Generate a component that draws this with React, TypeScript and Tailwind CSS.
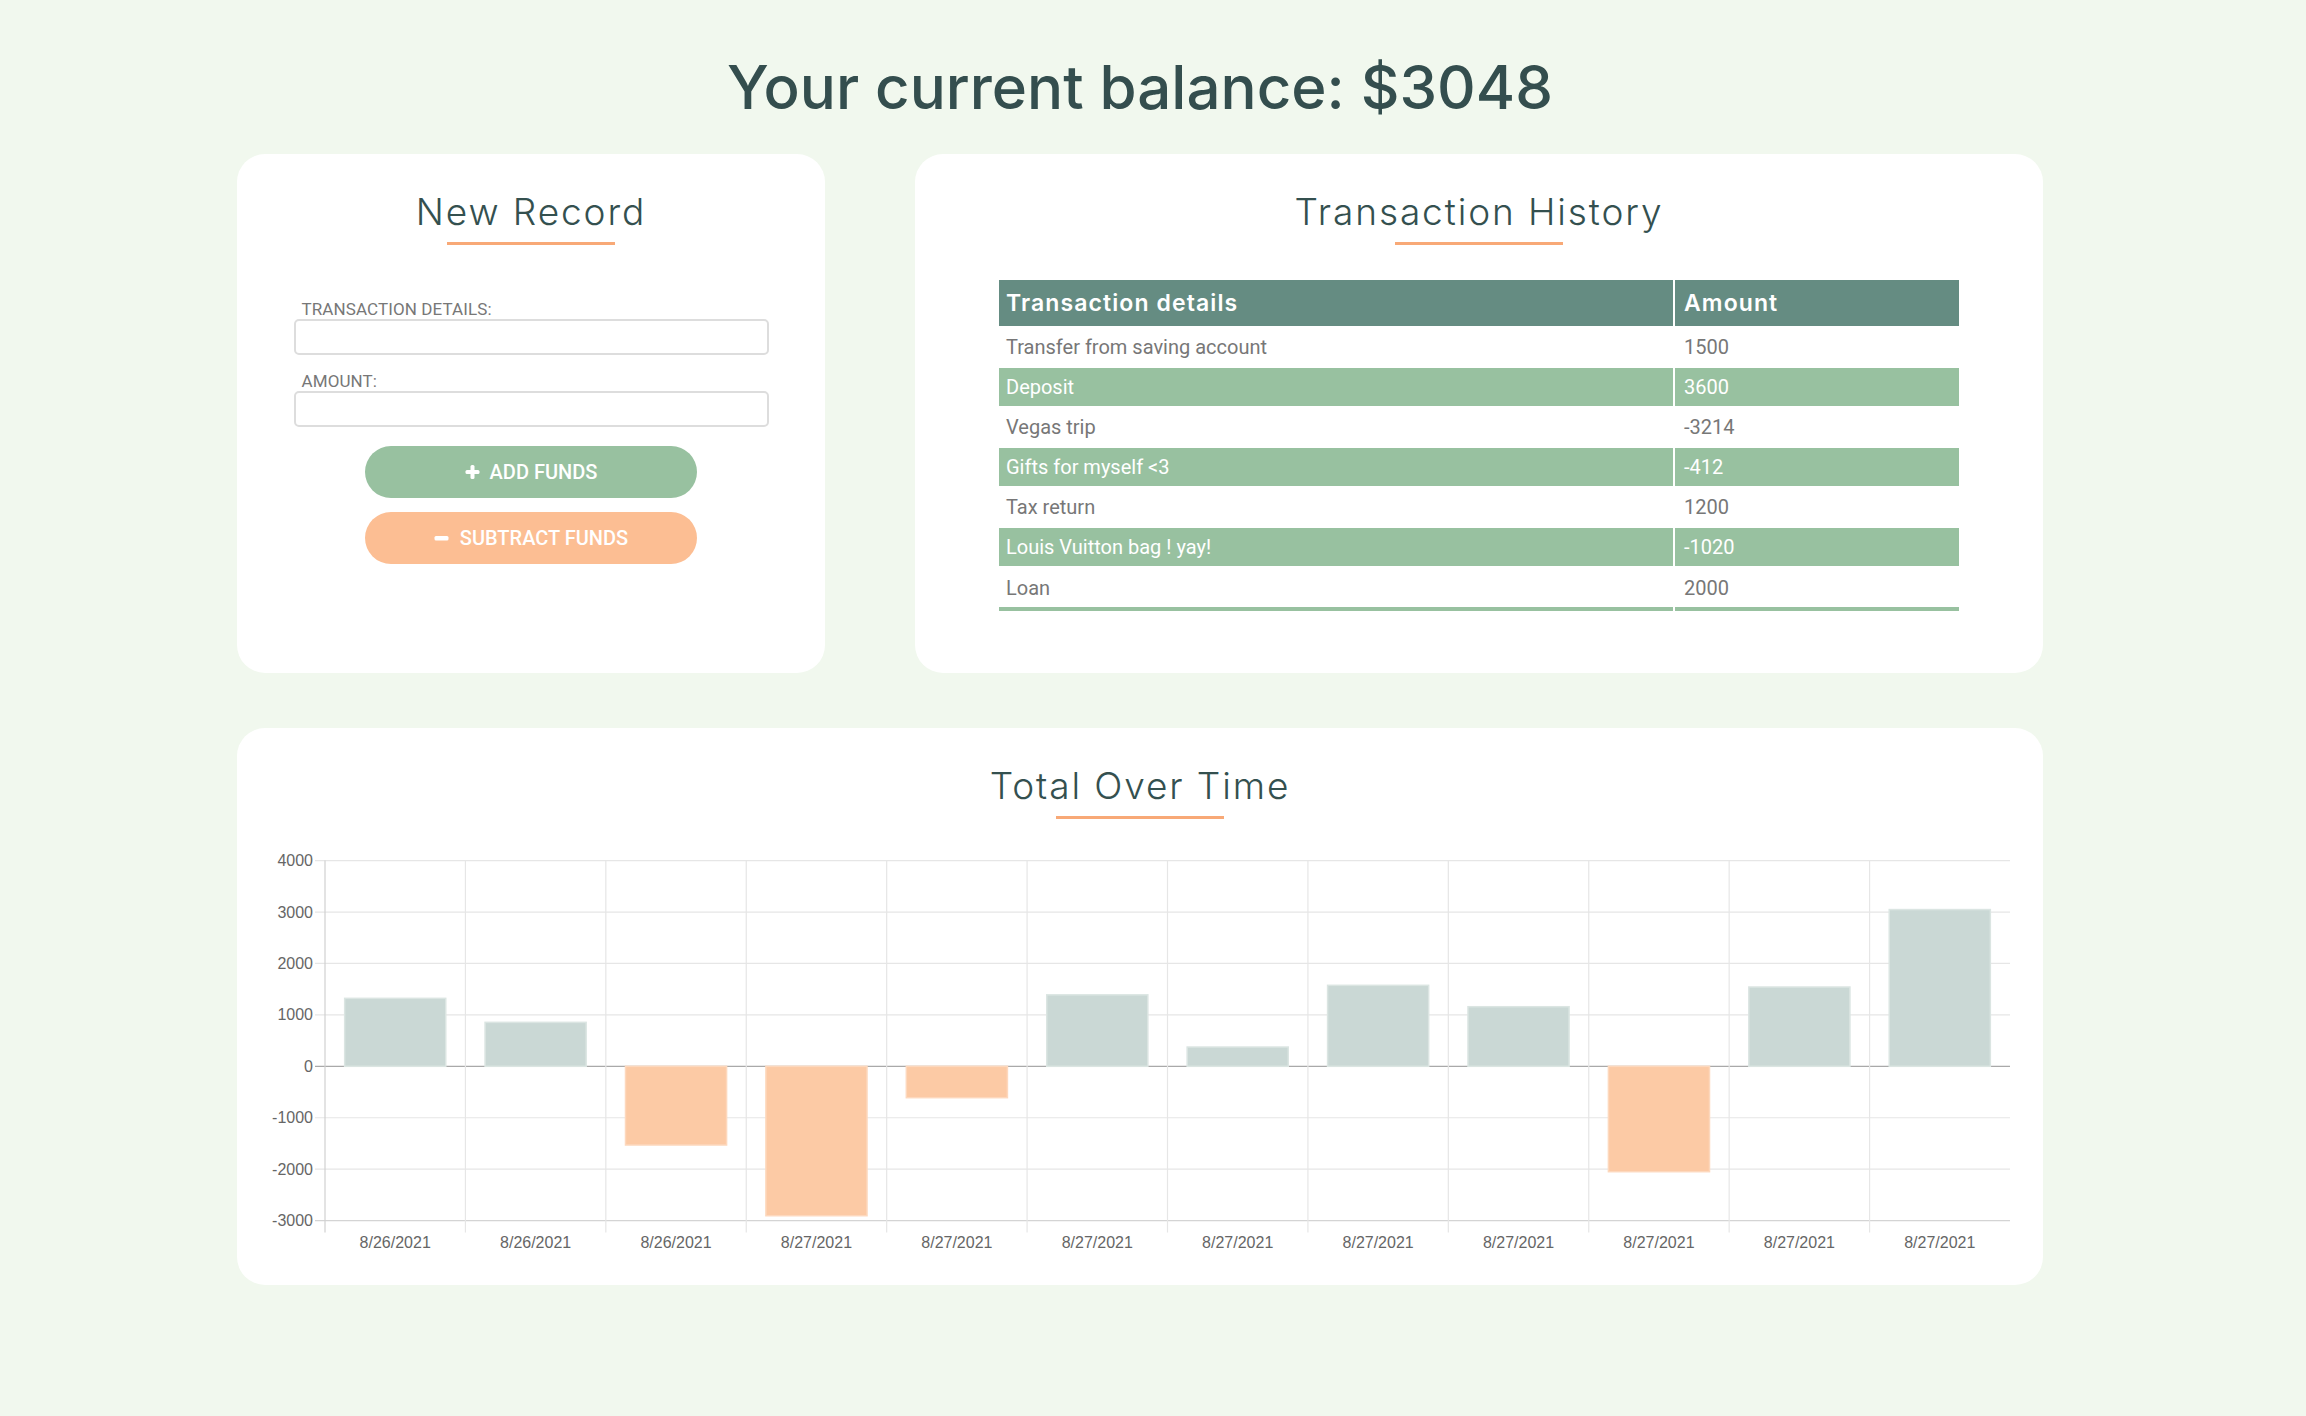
import React from 'react';

const records = [
  { details: 'Transfer from saving account', amount: 1500 },
  { details: 'Deposit', amount: 3600 },
  { details: 'Vegas trip', amount: -3214 },
  { details: 'Gifts for myself <3', amount: -412 },
  { details: 'Tax return', amount: 1200 },
  { details: 'Louis Vuitton bag ! yay!', amount: -1020 },
  { details: 'Loan', amount: 2000 },
];

const totals = [
  { date: '8/26/2021', value: 1322 },
  { date: '8/26/2021', value: 855 },
  { date: '8/26/2021', value: -1530 },
  { date: '8/27/2021', value: -2905 },
  { date: '8/27/2021', value: -610 },
  { date: '8/27/2021', value: 1390 },
  { date: '8/27/2021', value: 375 },
  { date: '8/27/2021', value: 1575 },
  { date: '8/27/2021', value: 1159 },
  { date: '8/27/2021', value: -2049 },
  { date: '8/27/2021', value: 1542 },
  { date: '8/27/2021', value: 3048 },
];

// chart geometry (px inside the svg)
const PLOT_LEFT = 88;
const PLOT_RIGHT = 1773;
const PLOT_TOP = 19.6;
const PER_1000 = 51.43;
const ZERO_Y = PLOT_TOP + 4 * PER_1000;
const CAT_W = (PLOT_RIGHT - PLOT_LEFT) / totals.length;
const BAR_W = CAT_W * 0.72;
const ticks = [4000, 3000, 2000, 1000, 0, -1000, -2000, -3000];

function CardTitle({ children }: { children: React.ReactNode }) {
  return (
    <div className="flex flex-col items-center">
      <h2 className="font-['Inter',sans-serif] font-light text-[37px] leading-[44px] tracking-[1.9px] text-[#34504f]">{children}</h2>
      <div className="mt-[8px] h-[3px] w-[168px] bg-[#f8a977]" />
    </div>
  );
}

function PlusIcon() {
  return (
    <svg width="15" height="14" viewBox="0 0 15 14" className="fill-white">
      <rect x="5.5" y="0" width="4" height="14" rx="1.5" />
      <rect x="0.5" y="5" width="14" height="4" rx="1.5" />
    </svg>
  );
}

function MinusIcon() {
  return (
    <svg width="15" height="14" viewBox="0 0 15 14" className="fill-white">
      <rect x="0.5" y="5" width="14" height="4.5" rx="1.5" />
    </svg>
  );
}

function NewRecord() {
  return (
    <div className="w-[588px] h-[519px] bg-white rounded-[28px] pt-[36px]">
      <CardTitle>New Record</CardTitle>
      <form className="mt-[54px] w-[475px] mx-auto flex flex-col font-['Roboto',sans-serif]" onSubmit={(e) => e.preventDefault()}>
        <label className="pl-[8px] text-[17px] leading-[20px] tracking-[0.1px] text-[#777] uppercase">Transaction details:</label>
        <input className="h-[36px] w-full border-2 border-[#dddddd] rounded-[5px] outline-none" />
        <label className="mt-[16px] pl-[8px] text-[17px] leading-[20px] tracking-[0.1px] text-[#777] uppercase">Amount:</label>
        <input className="h-[36px] w-full border-2 border-[#dddddd] rounded-[5px] outline-none" />
        <button type="button" className="mt-[19px] mx-auto w-[332px] h-[52px] rounded-full bg-[#98c1a0] text-white text-[20px] font-medium flex items-center justify-center gap-[10px]">
          <PlusIcon /> ADD FUNDS
        </button>
        <button type="button" className="mt-[14px] mx-auto w-[332px] h-[52px] rounded-full bg-[#fcbe93] text-white text-[20px] font-medium flex items-center justify-center gap-[11px]">
          <MinusIcon /> SUBTRACT FUNDS
        </button>
      </form>
    </div>
  );
}

function TransactionHistory() {
  return (
    <div className="flex-1 h-[519px] bg-white rounded-[28px] pt-[36px]">
      <CardTitle>Transaction History</CardTitle>
      <table className="mt-[33px] mx-auto w-[964px] border-separate border-spacing-[2px] table-fixed">
        <thead>
          <tr className="h-[46px] bg-[#658c82] text-white font-['Inter',sans-serif] font-semibold text-[23px] tracking-[1.1px] text-left">
            <th className="w-[674px] pl-[7px] font-semibold">Transaction details</th>
            <th className="pl-[9px] font-semibold">Amount</th>
          </tr>
        </thead>
        <tbody className="font-['Roboto',sans-serif] text-[20px]">
          {records.map((r, i) => {
            const green = i % 2 === 1;
            const last = i === records.length - 1;
            const cell = `${green ? 'bg-[#98c1a0] text-white' : 'text-[#777]'} ${last ? 'h-[43px] border-b-[4px] border-[#98c1a0]' : 'h-[38px]'}`;
            return (
              <tr key={i}>
                <td className={`${cell} pl-[7px]`}>{r.details}</td>
                <td className={`${cell} pl-[9px]`}>{r.amount}</td>
              </tr>
            );
          })}
        </tbody>
      </table>
    </div>
  );
}

function TotalChart() {
  const yOf = (v: number) => ZERO_Y - (v / 1000) * PER_1000;
  return (
    <svg width="1806" height="420" viewBox="0 0 1806 420" className="mt-[22px] block">
      {/* horizontal grid */}
      {ticks.map((t) => (
        <line key={t} x1={PLOT_LEFT - 10} x2={PLOT_RIGHT} y1={yOf(t)} y2={yOf(t)}
          className={t === 0 ? 'stroke-[#a9a9a9]' : t === -3000 ? 'stroke-[#d4d4d4]' : 'stroke-[#e6e6e6]'} strokeWidth="1.2" />
      ))}
      {/* vertical grid */}
      {totals.map((_, i) => (
        <line key={i} x1={PLOT_LEFT + i * CAT_W} x2={PLOT_LEFT + i * CAT_W} y1={PLOT_TOP} y2={yOf(-3000) + 12}
          className={i === 0 ? 'stroke-[#d0d0d0]' : 'stroke-[#e6e6e6]'} strokeWidth="1.2" />
      ))}
      {/* bars */}
      {totals.map((d, i) => {
        const x = PLOT_LEFT + (i + 0.5) * CAT_W - BAR_W / 2;
        const y = d.value >= 0 ? yOf(d.value) : ZERO_Y;
        const h = Math.abs(yOf(d.value) - ZERO_Y);
        return (
          <rect key={i} x={x} y={y} width={BAR_W} height={h}
            className={d.value >= 0 ? 'fill-[#cad8d5] stroke-[#dbe5e2]' : 'fill-[#fccaa5] stroke-[#fdd8bd]'} strokeWidth="1.5" />
        );
      })}
      <g className="font-['Liberation_Sans',Arial,sans-serif] text-[16px] fill-[#666]">
        {ticks.map((t) => (
          <text key={t} x={PLOT_LEFT - 12} y={yOf(t)} dy="0.35em" textAnchor="end">{t}</text>
        ))}
        {totals.map((d, i) => (
          <text key={i} x={PLOT_LEFT + (i + 0.5) * CAT_W} y={401.5} dy="0.35em" textAnchor="middle">{d.date}</text>
        ))}
      </g>
    </svg>
  );
}

export default function App() {
  return (
    <div className="min-h-screen bg-[#f1f8ee]">
      <div className="ml-[237px] w-[1806px] pt-[57px] pb-[60px]">
        <h1 className="text-center font-['Inter',sans-serif] font-medium text-[60px] leading-[60px] tracking-[0px] text-[#344e4e]">
          Your current balance: $3048
        </h1>

        <div className="mt-[37px] flex gap-[90px]">
          <NewRecord />
          <TransactionHistory />
        </div>

        {/* Chart */}
        <div className="mt-[55px] h-[557px] bg-white rounded-[28px] pt-[36px]">
          <CardTitle>Total Over Time</CardTitle>
          <TotalChart />
        </div>
      </div>
    </div>
  );
}
